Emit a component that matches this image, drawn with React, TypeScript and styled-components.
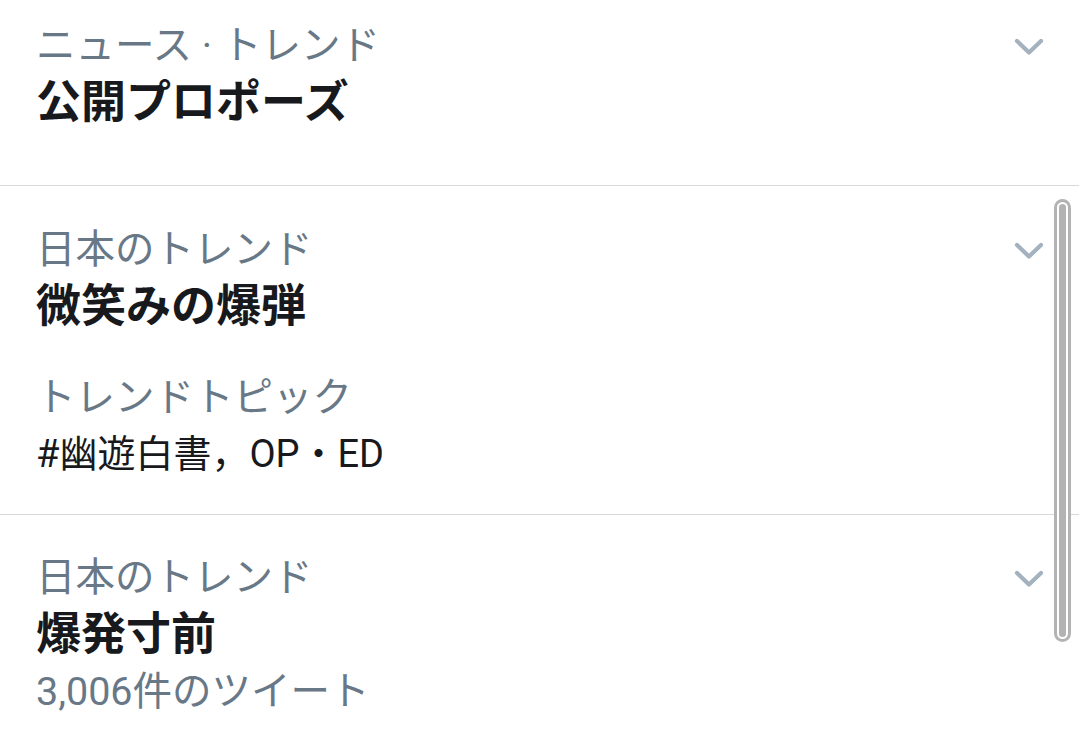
import { createGlobalStyle, styled } from "styled-components";

const GlobalStyle = createGlobalStyle`
  html, body {
    margin: 0;
    padding: 0;
    background: #ffffff;
  }
  body {
    font-family: Roboto, "Noto Sans CJK JP", sans-serif;
    overflow: hidden;
  }
`;

type Line =
  | { kind: "label"; text: string }
  | { kind: "title"; text: string }
  | { kind: "body"; text: string }
  | { kind: "spacer" };

type Trend = {
  lines: Line[];
  padTop: number;
  padBottom: number;
};

const trends: Trend[] = [
  {
    padTop: 17,
    padBottom: 54,
    lines: [
      { kind: "label", text: "ニュース · トレンド" },
      { kind: "title", text: "公開プロポーズ" },
    ],
  },
  {
    padTop: 35,
    padBottom: 31,
    lines: [
      { kind: "label", text: "日本のトレンド" },
      { kind: "title", text: "微笑みの爆弾" },
      { kind: "spacer" },
      { kind: "label", text: "トレンドトピック" },
      { kind: "body", text: "#幽遊白書，OP・ED" },
    ],
  },
  {
    padTop: 34,
    padBottom: 30,
    lines: [
      { kind: "label", text: "日本のトレンド" },
      { kind: "title", text: "爆発寸前" },
      { kind: "label", text: "3,006件のツイート" },
    ],
  },
];

const Chevron = () => (
  <svg width="30" height="18" viewBox="0 0 30 18" fill="none">
    <path
      d="M3 3 L15 14.5 L27 3"
      stroke="#a3b2be"
      strokeWidth="4.2"
      strokeLinecap="round"
      strokeLinejoin="round"
    />
  </svg>
);

const App = () => {
  return (
    <>
      <GlobalStyle />
      <Page>
        {trends.map((trend, i) => (
          <Row key={i} $top={trend.padTop} $bottom={trend.padBottom} $last={i === trends.length - 1}>
            <Content>
              {trend.lines.map((line, j) => {
                if (line.kind === "spacer") return <Spacer key={j} />;
                if (line.kind === "title") return <Title key={j}>{line.text}</Title>;
                if (line.kind === "body") return <Body key={j}>{line.text}</Body>;
                return <Label key={j}>{line.text}</Label>;
              })}
            </Content>
            <Toggle>
              <Chevron />
            </Toggle>
          </Row>
        ))}
        <Scrollbar>
          <Thumb />
        </Scrollbar>
      </Page>
    </>
  );
};

export default App;

const Page = styled.div`
  position: relative;
  width: 1079px;
  height: 746px;
  overflow: hidden;
  background: #fff;
`;

const Row = styled.div<{ $top: number; $bottom: number; $last: boolean }>`
  display: flex;
  align-items: flex-start;
  justify-content: space-between;
  padding: ${(p) => p.$top}px 35px ${(p) => p.$bottom}px 36px;
  border-bottom: ${(p) => (p.$last ? "none" : "1px solid #d6dadd")};
`;

const Content = styled.div`
  display: flex;
  flex-direction: column;
`;

const Label = styled.div`
  font-size: 39.5px;
  line-height: 57px;
  color: #687887;
  white-space: nowrap;
`;

const Title = styled.div`
  font-size: 45px;
  line-height: 57px;
  font-weight: 700;
  color: #17191c;
  white-space: nowrap;
`;

const Body = styled.div`
  font-size: 38px;
  line-height: 57px;
  color: #17191c;
  white-space: nowrap;
`;

const Spacer = styled.div`
  height: 34px;
`;

const Toggle = styled.div`
  display: flex;
  align-items: center;
  height: 57px;
  margin-top: 1px;
`;

const Scrollbar = styled.div`
  position: absolute;
  top: 199px;
  right: 8px;
  width: 17px;
  height: 443px;
  box-sizing: border-box;
  border: 3px solid #b3b3b3;
  border-radius: 9px;
  padding: 2px;
  background: #fff;
`;

const Thumb = styled.div`
  width: 100%;
  height: 100%;
  border-radius: 4px;
  background: #b3b3b3;
`;
